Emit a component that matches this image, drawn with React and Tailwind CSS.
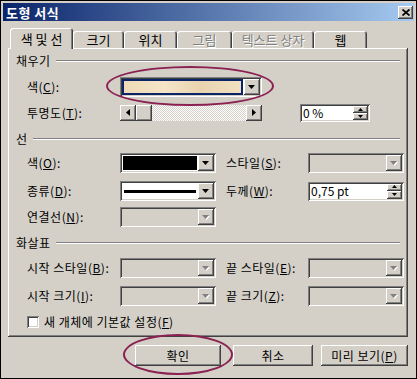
import React from "react";

const raised =
  "shadow-[inset_-1px_-1px_#404040,inset_1px_1px_#ffffff,inset_-2px_-2px_#808080,inset_2px_2px_#d4d0c8]";
const sunken =
  "shadow-[inset_1px_1px_#808080,inset_-1px_-1px_#ffffff,inset_2px_2px_#404040,inset_-2px_-2px_#d4d0c8]";

function Tri({ dir = "down", disabled, small }) {
  const shapes = {
    down: small ? "0,0 5,0 2.5,3" : "0,0 7,0 3.5,4",
    up: small ? "0,3 5,3 2.5,0" : "0,4 7,4 3.5,0",
    left: "4,0 4,7 0,3.5",
    right: "0,0 0,7 4,3.5",
  };
  const vertical = dir === "down" || dir === "up";
  const w = vertical ? (small ? 5 : 7) : 4;
  const h = vertical ? (small ? 3 : 4) : 7;
  return (
    <svg width={w + 1} height={h + 1} viewBox={`0 0 ${w + 1} ${h + 1}`}>
      {disabled && <polygon points={shapes[dir]} fill="#ffffff" transform="translate(1,1)" />}
      <polygon points={shapes[dir]} fill={disabled ? "#808080" : "#000000"} />
    </svg>
  );
}

function DropBtn({ disabled }) {
  return (
    <div className={`w-[16px] h-full shrink-0 bg-[#d4d0c8] flex items-center justify-center ${raised}`}>
      <Tri disabled={disabled} />
    </div>
  );
}

function Combo({ w, disabled, children }) {
  return (
    <div className={`${w} h-[20px] p-[2px] flex ${sunken} ${disabled ? "bg-[#d4d0c8]" : "bg-white"}`}>
      <div className="flex-1 min-w-0 flex items-center">{children}</div>
      <DropBtn disabled={disabled} />
    </div>
  );
}

function SpinButtons() {
  return (
    <div className="w-[15px] flex flex-col">
      <div className={`flex-1 bg-[#d4d0c8] flex items-center justify-center ${raised}`}>
        <Tri dir="up" small />
      </div>
      <div className={`flex-1 bg-[#d4d0c8] flex items-center justify-center ${raised}`}>
        <Tri dir="down" small />
      </div>
    </div>
  );
}

function Header({ text }) {
  return (
    <div className="h-[14px] flex items-center pl-[8px] pr-[8px] tracking-[0.5px]">
      <span>{text}</span>
      <div className="flex-1 ml-[5px] h-[2px] border-t border-t-[#808080] border-b border-b-white" />
    </div>
  );
}

function Label({ pre, k, className = "w-[93px]" }) {
  return (
    <div className={`${className} shrink-0 whitespace-nowrap tracking-[0.5px]`}>
      {pre}(<span className="underline underline-offset-[1px]">{k}</span>):
    </div>
  );
}

function Tab({ label, w, active, disabled }) {
  return (
    <div
      className={`${w} ${active ? "h-[21px] -mb-[1px] relative z-10" : "h-[17px]"} bg-[#d4d0c8] rounded-t-[3px] flex items-center justify-center text-[13px] shadow-[inset_1px_1px_#ffffff,inset_-1px_0_#404040,inset_-2px_0_#808080] ${disabled ? "text-[#808080] [text-shadow:1px_1px_0_#ffffff]" : ""}`}
    >
      {label}
    </div>
  );
}

function Button({ w, children }) {
  return (
    <div className={`${w} h-[21px] bg-[#d4d0c8] flex items-center justify-center text-[12px] tracking-[0.5px] ${raised}`}>
      {children}
    </div>
  );
}

export default function App() {
  return (
    <div className="relative w-[417px] h-[379px] overflow-hidden bg-[#d4d0c8] border border-black p-[2px] text-[12px] leading-none text-black [font-family:'Noto_Sans_CJK_KR',sans-serif]">
      {/* Title bar */}
      <div className="h-[18px] flex items-center justify-between pl-[3px] pr-[1px] bg-[linear-gradient(90deg,#0a246a,#a6caf0)]">
        <span className="text-white font-bold text-[13px] tracking-[0.5px]">도형 서식</span>
        <div className={`w-[15px] h-[13px] bg-[#d4d0c8] flex items-center justify-center ${raised}`}>
          <svg width="8" height="7" viewBox="0 0 8 7">
            <path d="M0.5 0.5L7.5 6.5M7.5 0.5L0.5 6.5" stroke="#000" strokeWidth="1.7" />
          </svg>
        </div>
      </div>

      <div className="ml-[5px] w-[400px]">
        {/* Tabs */}
        <div className="flex items-end h-[20px] mt-[7px] pl-[2px]">
          <Tab label="색 및 선" w="w-[63px]" active />
          <Tab label="크기" w="w-[51px]" />
          <Tab label="위치" w="w-[53px]" />
          <Tab label="그림" w="w-[55px]" disabled />
          <Tab label="텍스트 상자" w="w-[82px]" disabled />
          <Tab label="웹" w="w-[53px]" />
        </div>

        {/* Panel */}
        <div className={`h-[289px] bg-[#d4d0c8] flex flex-col ${raised}`}>
          <div className="mt-[6px]">
            <Header text="채우기" />
          </div>

          <div className="mt-[9px] h-[20px] flex items-center pl-[19px]">
            <Label pre="색" k="C" />
            <div className={`w-[142px] h-[20px] p-[2px] flex bg-white ${sunken}`}>
              <div className="flex-1 bg-[#0a246a] p-[2px] mr-[1px]">
                <div className="w-full h-full bg-[linear-gradient(90deg,#eedab6,#f4e4c8_35%,#e9d4ae_65%,#f2e0c1)]" />
              </div>
              <DropBtn />
            </div>
          </div>

          <div className="mt-[7px] h-[18px] flex items-center pl-[19px]">
            <Label pre="투명도" k="T" />
            <div className="w-[142px] h-[16px] flex">
              <div className={`w-[16px] bg-[#d4d0c8] flex items-center justify-center ${raised}`}>
                <Tri dir="left" />
              </div>
              <div className={`w-[16px] bg-[#d4d0c8] ${raised}`} />
              <div className="flex-1 bg-[repeating-conic-gradient(#d4d0c8_0_25%,#ffffff_0_50%)] bg-[length:2px_2px]" />
              <div className={`w-[16px] bg-[#d4d0c8] flex items-center justify-center ${raised}`}>
                <Tri dir="right" />
              </div>
            </div>
            <div className={`ml-[38px] w-[70px] h-[18px] p-[2px] flex bg-white ${sunken}`}>
              <div className="flex-1 flex items-center pl-[1px]">0 %</div>
              <SpinButtons />
            </div>
          </div>

          <div className="mt-[10px]">
            <Header text="선" />
          </div>

          <div className="mt-[7px] h-[20px] flex items-center pl-[19px]">
            <Label pre="색" k="O" />
            <Combo w="w-[96px]">
              <div className="w-full h-full p-[1px]">
                <div className="w-full h-full bg-black" />
              </div>
            </Combo>
            <Label pre="스타일" k="S" className="w-[92px] pl-[10px]" />
            <Combo w="w-[96px]" disabled />
          </div>

          <div className="mt-[8px] h-[20px] flex items-center pl-[19px]">
            <Label pre="종류" k="D" />
            <Combo w="w-[96px]">
              <div className="w-full px-[2px]">
                <div className="h-[3px] bg-black" />
              </div>
            </Combo>
            <Label pre="두께" k="W" className="w-[92px] pl-[10px]" />
            <div className={`w-[96px] h-[19px] p-[2px] flex bg-white ${sunken}`}>
              <div className="flex-1 flex items-center pl-[1px]">0,75 pt</div>
              <SpinButtons />
            </div>
          </div>

          <div className="mt-[6px] h-[20px] flex items-center pl-[19px]">
            <Label pre="연결선" k="N" />
            <Combo w="w-[96px]" disabled />
          </div>

          <div className="mt-[9px]">
            <Header text="화살표" />
          </div>

          <div className="mt-[8px] h-[20px] flex items-center pl-[19px]">
            <Label pre="시작 스타일" k="B" />
            <Combo w="w-[96px]" disabled />
            <Label pre="끝 스타일" k="E" className="w-[92px] pl-[10px]" />
            <Combo w="w-[96px]" disabled />
          </div>

          <div className="mt-[8px] h-[20px] flex items-center pl-[19px]">
            <Label pre="시작 크기" k="I" />
            <Combo w="w-[96px]" disabled />
            <Label pre="끝 크기" k="Z" className="w-[92px] pl-[10px]" />
            <Combo w="w-[96px]" disabled />
          </div>

          <div className="mt-[9px] h-[13px] flex items-center pl-[19px]">
            <div className={`w-[12px] h-[12px] bg-white ${sunken}`} />
            <span className="ml-[5px] tracking-[0.5px]">
              새 개체에 기본값 설정(<span className="underline underline-offset-[1px]">F</span>)
            </span>
          </div>
        </div>

        {/* Buttons */}
        <div className="mt-[8px] flex justify-end">
          <Button w="w-[86px]">확인</Button>
          <div className="ml-[12px]">
            <Button w="w-[80px]">취소</Button>
          </div>
          <div className="ml-[8px]">
            <Button w="w-[87px]">
              <span>
                미리 보기(<span className="underline underline-offset-[1px]">P</span>)
              </span>
            </Button>
          </div>
        </div>
      </div>

      {/* Annotation ellipses */}
      <div className="absolute left-[105px] top-[65px] w-[168px] h-[40px] rounded-[50%] border-2 border-[#8b2152]" />
      <div className="absolute left-[122px] top-[333px] w-[110px] h-[41px] rounded-[50%] border-2 border-[#8b2152]" />
    </div>
  );
}
